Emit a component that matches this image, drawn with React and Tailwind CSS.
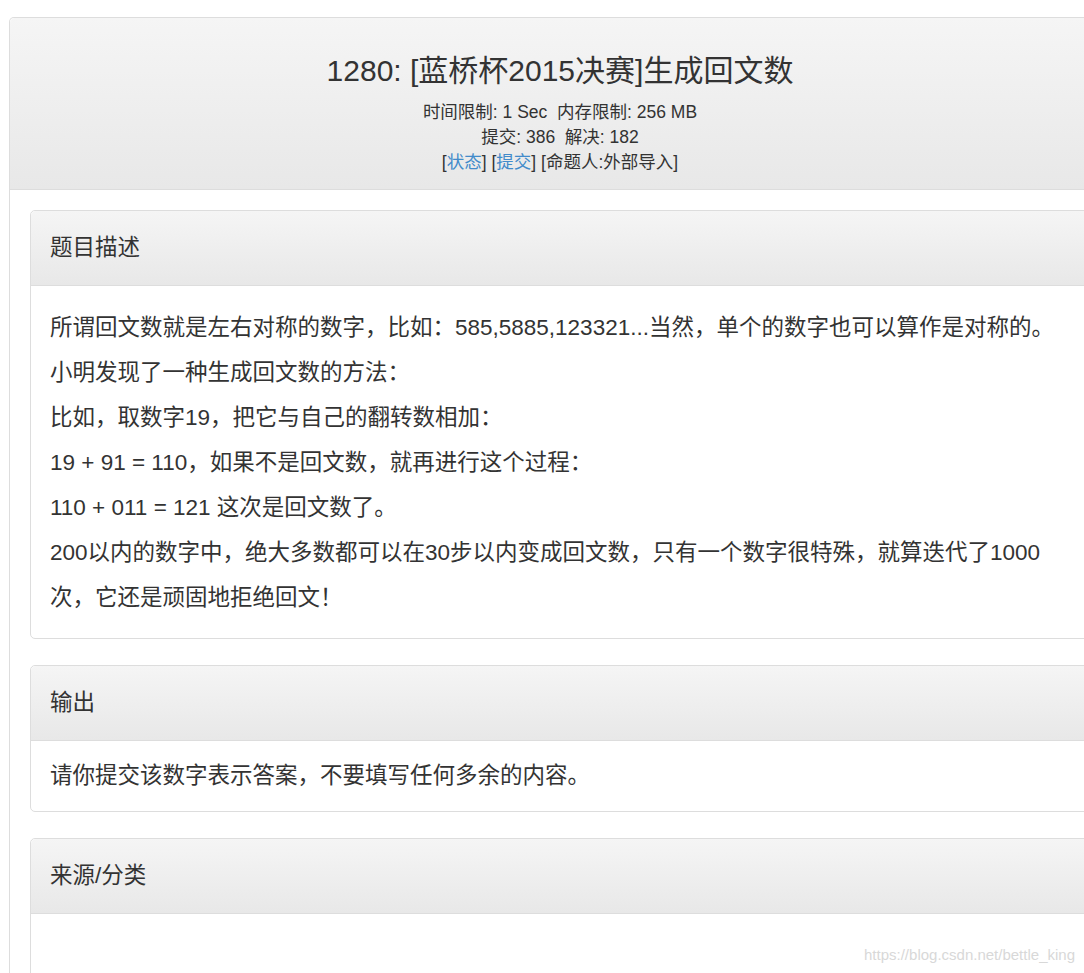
export default function App() {
  const font = { fontFamily: '"Liberation Sans", "Noto Sans CJK SC", sans-serif' };

  const Panel = ({ title, children, bodyClass, last }) => (
    <div className={`border border-[#ddd] rounded-[5px] bg-white ${last ? "" : "mb-[26px]"}`}>
      <div className="h-[75px] flex items-center px-[19px] border-b border-[#ddd] rounded-t-[5px] bg-gradient-to-b from-[#f5f5f5] to-[#e8e8e8] text-[22.5px] text-[#333]">
        {title}
      </div>
      <div className={`px-[19px] text-[22.5px] text-[#333] ${bodyClass}`}>{children}</div>
    </div>
  );

  return (
    <div className="w-[1084px] h-[973px] overflow-hidden bg-white relative" style={font}>
      <div className="pt-[17px] pl-[9px]">
        <div className="w-[1102px] border border-[#ddd] rounded-tl-[5px] border-b-0">
          {/* 题目头部 */}
          <div className="bg-gradient-to-b from-[#f5f5f5] to-[#e8e8e8] border-b border-[#ddd] rounded-t-[5px] pt-[12px] pb-[14px] text-center text-[#333]">
            <h2 className="text-[30px] leading-[33px] mt-[24px] mb-[13px]">1280: [蓝桥杯2015决赛]生成回文数</h2>
            <div className="text-[17.5px] leading-[25px]">
              <div>时间限制: 1 Sec&nbsp; 内存限制: 256 MB</div>
              <div>提交: 386&nbsp; 解决: 182</div>
              <div>
                [<a className="text-[#428bca]">状态</a>] [<a className="text-[#428bca]">提交</a>] [命题人:外部导入]
              </div>
            </div>
          </div>

          {/* 内容 */}
          <div className="pt-[20px] pl-[20px] pr-[20px]">
            <Panel title="题目描述" bodyClass="leading-[45px] pt-[19px] pb-[18px]">
              <p>所谓回文数就是左右对称的数字，比如：585,5885,123321...当然，单个的数字也可以算作是对称的。</p>
              <p>小明发现了一种生成回文数的方法：</p>
              <p>比如，取数字19，把它与自己的翻转数相加：</p>
              <p>19 + 91 = 110，如果不是回文数，就再进行这个过程：</p>
              <p>110 + 011 = 121 这次是回文数了。</p>
              <p>200以内的数字中，绝大多数都可以在30步以内变成回文数，只有一个数字很特殊，就算迭代了1000次，它还是顽固地拒绝回文！</p>
            </Panel>
            <Panel title="输出" bodyClass="leading-[32px] pt-[19px] pb-[19px]">
              请你提交该数字表示答案，不要填写任何多余的内容。
            </Panel>
            <Panel title="来源/分类" bodyClass="h-[120px]" last />
          </div>
        </div>
      </div>

      <div className="absolute right-[9px] top-[945px] text-[15px] leading-[20px] text-[#d8d8d8]">
        https://blog.csdn.net/bettle_king
      </div>
    </div>
  );
}
